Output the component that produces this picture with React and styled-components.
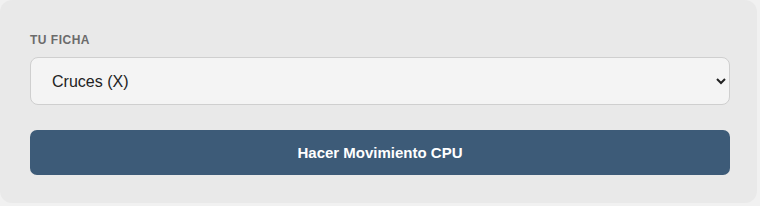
import React from "react";
import styled, { createGlobalStyle } from "styled-components";

const Global = createGlobalStyle`
  html, body { margin: 0; padding: 0; background: #f1f1f1; }
  body { font-family: "Liberation Sans", Arial, sans-serif; }
`;

const Card = styled.div`
  box-sizing: border-box;
  width: 757px;
  height: 203px;
  background: #e9e9e9;
  border-radius: 12px;
  padding: 33px 30px 0 30px;
  display: flex;
  flex-direction: column;
`;

const Label = styled.label`
  font-size: 12px;
  font-weight: 700;
  color: #6b6b6b;
  letter-spacing: 0.5px;
  text-transform: uppercase;
  line-height: 14px;
  margin-bottom: 10px;
`;

const Select = styled.select`
  box-sizing: border-box;
  width: 700px;
  height: 48px;
  padding: 0 8px 0 17px;
  font-family: "Liberation Sans", Arial, sans-serif;
  font-size: 16px;
  color: #222;
  background: #f4f4f4;
  border: 1px solid #cfcfcf;
  border-radius: 8px;
  margin-bottom: 25px;
`;

const Button = styled.button`
  box-sizing: border-box;
  width: 700px;
  height: 45px;
  border: none;
  border-radius: 7px;
  background: #3d5b78;
  color: #fff;
  font-family: "Liberation Sans", Arial, sans-serif;
  font-size: 15px;
  font-weight: 700;
  cursor: pointer;
`;

export default function App() {
  return (
    <>
      <Global />
      <Card>
        <Label htmlFor="ficha">Tu ficha</Label>
        <Select id="ficha" defaultValue="X">
          <option value="X">Cruces (X)</option>
          <option value="O">Círculos (O)</option>
        </Select>
        <Button>Hacer Movimiento CPU</Button>
      </Card>
    </>
  );
}
